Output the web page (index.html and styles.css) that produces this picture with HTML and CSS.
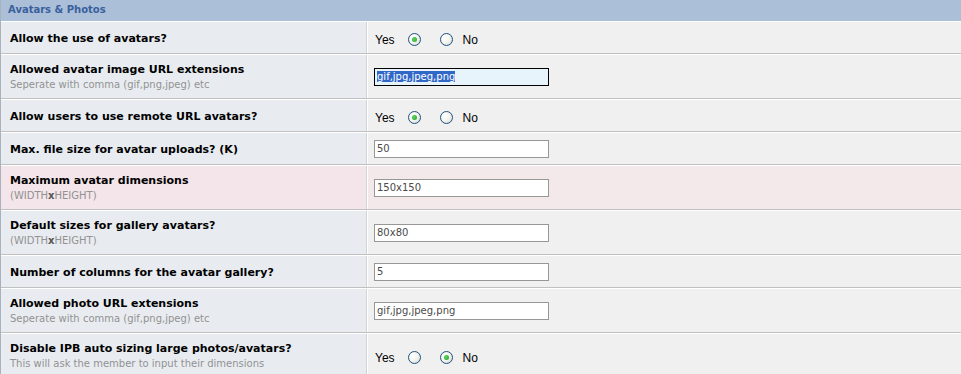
FILE: index.html
```html
<!DOCTYPE html>
<html lang="en">
<head>
  <meta charset="UTF-8">
  <title>Avatars &amp; Photos</title>
  <link rel="stylesheet" href="styles.css">
</head>
<body>
  <div class="tableborder">
    <div class="maintitle">Avatars &amp; Photos</div>

    <div class="row">
      <div class="row-label"><b>Allow the use of avatars?</b></div>
      <div class="row-field">
        <label class="yesno">Yes <input type="radio" name="avatars_on" checked></label>
        <label class="yesno"><input type="radio" name="avatars_on"> No</label>
      </div>
    </div>

    <div class="row">
      <div class="row-label"><b>Allowed avatar image URL extensions</b><span class="desc">Seperate with comma (gif,png,jpeg) etc</span></div>
      <div class="row-field"><input type="text" class="textinput focused" id="avatar_ext" value="gif,jpg,jpeg,png"></div>
    </div>

    <div class="row">
      <div class="row-label"><b>Allow users to use remote URL avatars?</b></div>
      <div class="row-field">
        <label class="yesno">Yes <input type="radio" name="avatar_url" checked></label>
        <label class="yesno"><input type="radio" name="avatar_url"> No</label>
      </div>
    </div>

    <div class="row">
      <div class="row-label"><b>Max. file size for avatar uploads? (K)</b></div>
      <div class="row-field"><input type="text" class="textinput" value="50"></div>
    </div>

    <div class="row row-hover">
      <div class="row-label"><b>Maximum avatar dimensions</b><span class="desc">(WIDTH<b>x</b>HEIGHT)</span></div>
      <div class="row-field"><input type="text" class="textinput" value="150x150"></div>
    </div>

    <div class="row">
      <div class="row-label"><b>Default sizes for gallery avatars?</b><span class="desc">(WIDTH<b>x</b>HEIGHT)</span></div>
      <div class="row-field"><input type="text" class="textinput" value="80x80"></div>
    </div>

    <div class="row">
      <div class="row-label"><b>Number of columns for the avatar gallery?</b></div>
      <div class="row-field"><input type="text" class="textinput" value="5"></div>
    </div>

    <div class="row">
      <div class="row-label"><b>Allowed photo URL extensions</b><span class="desc">Seperate with comma (gif,png,jpeg) etc</span></div>
      <div class="row-field"><input type="text" class="textinput" value="gif,jpg,jpeg,png"></div>
    </div>

    <div class="row">
      <div class="row-label"><b>Disable IPB auto sizing large photos/avatars?</b><span class="desc">This will ask the member to input their dimensions</span></div>
      <div class="row-field">
        <label class="yesno">Yes <input type="radio" name="no_autosize"></label>
        <label class="yesno"><input type="radio" name="no_autosize" checked> No</label>
      </div>
    </div>
  </div>

  <script>
    document.getElementById('avatar_ext').select();
  </script>
</body>
</html>
```

FILE: styles.css
```css
body {
  margin: 0;
  font-family: "DejaVu Sans", Verdana, sans-serif;
  font-size: 11px;
  color: #000;
  background: #fff;
}

.tableborder {
  border-left: 1px solid #a9b2bc;
}

.maintitle {
  background-color: #abbfd9;
  color: #3a5f9b;
  font-weight: bold;
  font-size: 10px;
  height: 21px;
  line-height: 20px;
  padding-left: 7px;
  border-bottom: 1px solid #fff;
}

.row {
  display: grid;
  grid-template-columns: 366px 1fr;
  border-bottom: 1px solid #c0c0c0;
  border-top: 1px solid #fff;
}

.maintitle + .row {
  border-top: none;
}

.row-label {
  background-color: #e8ecf0;
  padding: 6px 9px;
  border-right: 1px solid #d4d4d4;
  display: flex;
  flex-direction: column;
  justify-content: center;
  min-height: 19px;
}

.row-label b {
  font-size: 11px;
  line-height: 15px;
  padding-top: 1px;
}

.desc {
  color: #929292;
  font-size: 10px;
  line-height: 14px;
  margin-top: 1px;
}

.desc b {
  color: #555;
  font-size: 10px;
  line-height: 14px;
  padding-top: 0;
}

.row-field {
  background-color: #f0f0f0;
  border-left: 1px solid #fff;
  display: flex;
  align-items: center;
  padding-left: 6px;
}

.row-hover .row-label {
  background-color: #f3e5e9;
}

.row-hover .row-field {
  background-color: #f3e8ea;
}

.yesno {
  display: inline-flex;
  align-items: center;
  font-family: "Liberation Sans", Arial, sans-serif;
  font-size: 12px;
  margin-top: 4px;
  margin-left: 1px;
}

.yesno + .yesno {
  margin-left: 0;
}

.yesno input {
  appearance: none;
  width: 13px;
  height: 13px;
  margin: 0 19px 0 13px;
  border: 1px solid #1c5180;
  border-radius: 50%;
  background: radial-gradient(circle at 35% 35%, #fff 0%, #f4f4f0 45%, #d6d6cf 100%);
  position: relative;
}

.yesno + .yesno input {
  margin: 0 10px 0 0;
}

.yesno input:checked::after {
  content: "";
  position: absolute;
  left: 3px;
  top: 3px;
  width: 5px;
  height: 5px;
  border-radius: 50%;
  background: radial-gradient(circle at 40% 40%, #5ed35e, #21a121);
}

.textinput {
  width: 169px;
  height: 14px;
  padding: 1px 2px;
  margin: 0;
  border: 1px solid #979797;
  background: #fff;
  font-family: "DejaVu Sans", Verdana, sans-serif;
  font-size: 10px;
  color: #4a4a4a;
  outline: none;
}

.textinput.focused {
  border-color: #000;
  background-color: #e8f4fc;
}

.textinput::selection {
  background-color: #3168c8;
  color: #fff;
}
```
